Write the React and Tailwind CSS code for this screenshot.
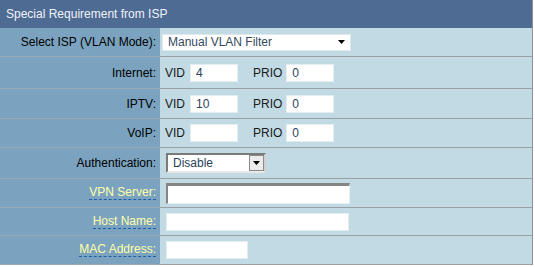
import { useState } from 'react';

const LABEL = 'flex items-center justify-end pr-[4px] bg-[#7ba3bf] border-b border-[#9ba9b3]';
const VALUE = 'flex items-center bg-[#c1dae4] border-b border-[#9a9fa3]';

const Arrow = () => (
  <svg width="7" height="4" viewBox="0 0 7 4" className="block">
    <path d="M0 0h7L3.5 4z" fill="#000" />
  </svg>
);

const HintLabel = ({ children }) => (
  <span className="text-[#ffffa8] border-b border-dashed border-[#1f5fa8] leading-[13px]">
    {children}
  </span>
);

const SmallBox = ({ value }) => (
  <div className="w-[48px] h-[18px] bg-white border border-[#e4eef2] flex items-center pl-[5px] text-[#2b3f5c]">
    {value}
  </div>
);

const VlanRow = ({ label, vid, prio, h }) => (
  <>
    <div className={`${LABEL} ${h}`}>{label}</div>
    <div className={`${VALUE} ${h} pl-[5px]`}>
      <span className="text-[#1a1a1a]">VID</span>
      <div className="ml-[5px]"><SmallBox value={vid} /></div>
      <span className="ml-[15px] text-[#1a1a1a]">PRIO</span>
      <div className="ml-[4px]"><SmallBox value={prio} /></div>
    </div>
  </>
);

export default function App() {
  const [auth] = useState('Disable');

  return (
    <div className="w-[535px] h-[267px] bg-white text-[12px] font-['Liberation_Sans',Arial,sans-serif]">
      <div className="w-[533px] border-r border-[#8e9397]">
        <div className="h-[28px] bg-[#4e6b94] text-[#eef2f7] flex items-center pl-[6px]">
          Special Requirement from ISP
        </div>

        <div className="grid grid-cols-[160px_1fr]">
          <div className={`${LABEL} h-[29px]`}>Select ISP (VLAN Mode):</div>
          <div className={`${VALUE} h-[29px] pl-[2px]`}>
            <div className="w-[189px] h-[17px] bg-white border border-[#dfe8ec] flex items-center justify-between pl-[5px] pr-[5px] text-[#34495f]">
              <span>Manual VLAN Filter</span>
              <Arrow />
            </div>
          </div>

          <VlanRow label="Internet:" vid="4" prio="0" h="h-[32px]" />
          <VlanRow label="IPTV:" vid="10" prio="0" h="h-[30px]" />
          <VlanRow label="VoIP:" vid="" prio="0" h="h-[29px]" />

          <div className={`${LABEL} h-[31px]`}>Authentication:</div>
          <div className={`${VALUE} h-[31px] pl-[6px]`}>
            <div className="w-[100px] h-[20px] bg-white border-2 border-t-[#7a7a7a] border-l-[#7a7a7a] border-b-[#e8e8e8] border-r-[#d0d0d0] flex items-center justify-between pl-[5px] text-[#2b3f5c]">
              <span>{auth}</span>
              <div className="w-[15px] h-[16px] bg-[#ececec] border border-[#8a8a8a] flex items-center justify-center">
                <Arrow />
              </div>
            </div>
          </div>

          <div className={`${LABEL} h-[29px]`}><HintLabel>VPN Server:</HintLabel></div>
          <div className={`${VALUE} h-[29px] pl-[6px]`}>
            <div className="w-[184px] h-[21px] bg-white border-t-[3px] border-l-2 border-t-[#858585] border-l-[#858585] border-r border-b border-r-[#e6eef2] border-b-[#e6eef2]" />
          </div>

          <div className={`${LABEL} h-[28px]`}><HintLabel>Host Name:</HintLabel></div>
          <div className={`${VALUE} h-[28px] pl-[6px]`}>
            <div className="w-[183px] h-[18px] bg-white border border-[#e3ecf0]" />
          </div>

          <div className={`${LABEL} h-[29px]`}><HintLabel>MAC Address:</HintLabel></div>
          <div className={`${VALUE} h-[29px] pl-[6px]`}>
            <div className="w-[82px] h-[18px] bg-white border border-[#e3ecf0]" />
          </div>
        </div>
      </div>
    </div>
  );
}
